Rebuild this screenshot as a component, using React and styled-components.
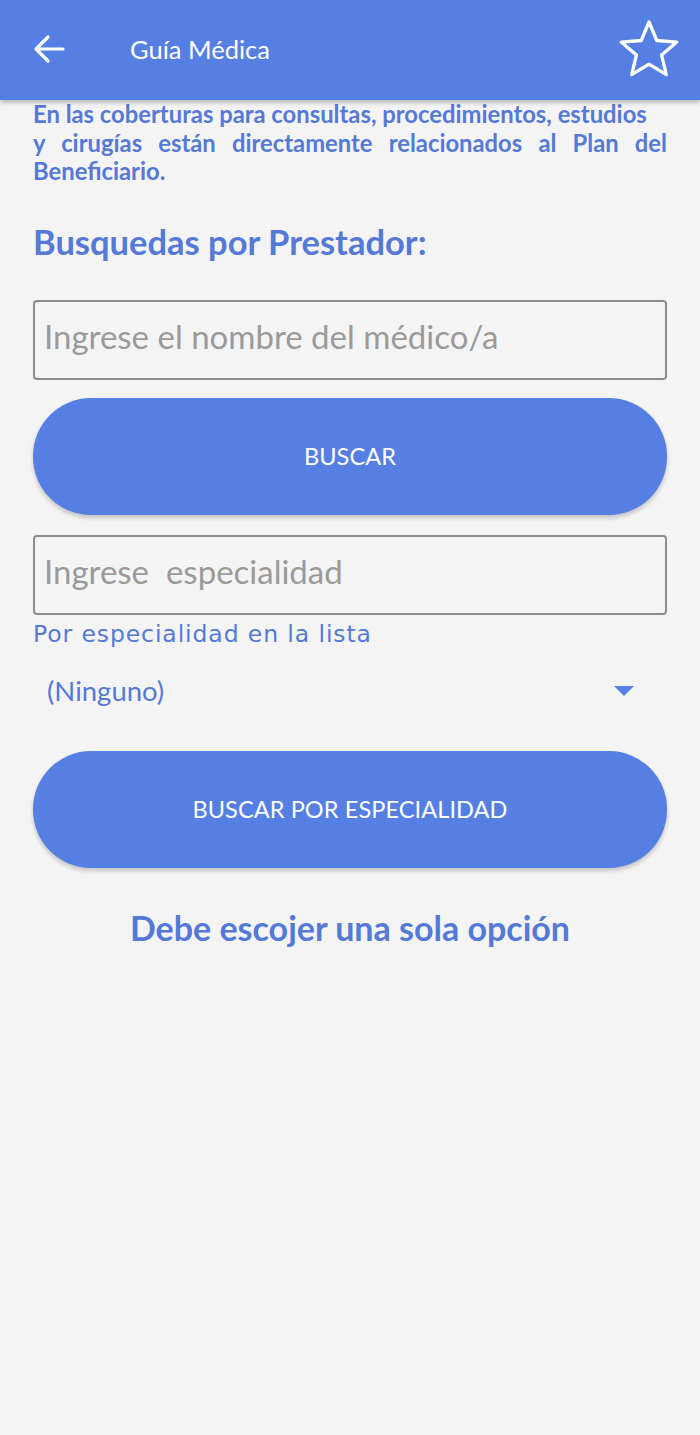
import React from "react";
import styled, { createGlobalStyle } from "styled-components";

const Global = createGlobalStyle`
  html, body { margin: 0; padding: 0; background: #f4f4f4; }
  body { font-family: Lato, "Open Sans", sans-serif; }
  * { box-sizing: border-box; }
`;

const BLUE = "#567fe3";
const TEXT_BLUE = "#5479d6";

const Page = styled.div`
  width: 700px;
  min-height: 1435px;
  background: #f4f4f4;
`;

const Header = styled.header`
  height: 100px;
  background: ${BLUE};
  display: flex;
  align-items: center;
  padding: 0 20px 2px 33px;
  box-shadow: 0 2px 5px rgba(0, 0, 0, 0.3);
  position: relative;
  z-index: 1;
`;

const IconButton = styled.div`
  display: flex;
  align-items: center;
  justify-content: center;
`;

const Title = styled.h1`
  margin: 0 0 0 65px;
  flex: 1;
  font-family: Lato, sans-serif;
  font-weight: 400;
  font-size: 25.5px;
  color: #fff;
`;

const Content = styled.main`
  padding: 0 33px;
  display: flex;
  flex-direction: column;
`;

const Notice = styled.p`
  margin: 0;
  font-family: Lato, sans-serif;
  font-weight: 700;
  font-size: 23.8px;
  line-height: 28.5px;
  color: ${TEXT_BLUE};
  text-align: justify;
`;

const Heading = styled.h2`
  margin: 36px 0 0;
  font-family: Lato, sans-serif;
  font-weight: 700;
  font-size: 34.5px;
  line-height: 40px;
  color: ${TEXT_BLUE};
`;

const Input = styled.input`
  display: block;
  width: 100%;
  height: 80px;
  margin-top: ${(p) => p.$mt}px;
  border: 2px solid #8c8c8c;
  border-radius: 4px;
  background: transparent;
  padding: 0 9px 7px;
  font-family: Lato, sans-serif;
  font-size: 33px;
  color: #333;
  outline: none;
  &::placeholder { color: #9a9a9a; }
`;

const Button = styled.button`
  display: flex;
  align-items: center;
  justify-content: center;
  width: 100%;
  height: 117px;
  margin-top: ${(p) => p.$mt}px;
  border: none;
  border-radius: 58px;
  background: ${BLUE};
  color: #fff;
  font-family: Lato, sans-serif;
  font-size: 23.5px;
  letter-spacing: 0.1px;
  box-shadow: 0 3px 4px rgba(0, 0, 0, 0.2);
`;

const Label = styled.div`
  margin-top: 5px;
  font-family: "DejaVu Sans", "Open Sans", sans-serif;
  font-size: 23.5px;
  line-height: 28px;
  color: ${TEXT_BLUE};
  letter-spacing: 0.9px;
`;

const Select = styled.div`
  display: flex;
  align-items: center;
  justify-content: space-between;
  height: 56px;
  margin-top: 15px;
  padding: 0 33px 0 14px;
  font-family: Lato, sans-serif;
  font-size: 27.5px;
  color: ${TEXT_BLUE};
`;

const Caret = styled.span`
  width: 0;
  height: 0;
  border-left: 10px solid transparent;
  border-right: 10px solid transparent;
  border-top: 10px solid ${BLUE};
`;

const Footer = styled.p`
  margin: 40px 0 0;
  text-align: center;
  font-family: Lato, sans-serif;
  font-weight: 700;
  font-size: 34px;
  line-height: 40px;
  color: ${TEXT_BLUE};
`;

export default function App() {
  return (
    <Page>
      <Global />
      <Header>
        <IconButton>
          <svg width="32" height="30" viewBox="0 0 32 30" fill="none" stroke="#fff" strokeWidth="3.2" strokeLinecap="round" strokeLinejoin="round">
            <path d="M30 15H3M15 3L3 15l12 12" />
          </svg>
        </IconButton>
        <Title>Guía Médica</Title>
        <IconButton>
          <svg width="62" height="60" viewBox="0 0 62 60" fill="none" stroke="#fff" strokeWidth="3.3" strokeLinejoin="round">
            <path d="M31 3l7.8 18.5 20 1.6-15.2 13 4.7 19.5L31 45.2 13.7 55.6l4.7-19.5L3.2 23.1l20-1.6z" />
          </svg>
        </IconButton>
      </Header>
      <Content>
        <Notice>
          En las coberturas para consultas, procedimientos, estudios
          <br />y cirugías están directamente relacionados al Plan del Beneficiario.
        </Notice>
        <Heading>Busquedas por Prestador:</Heading>
        <Input $mt={38} placeholder="Ingrese el nombre del médico/a" />
        <Button $mt={18}>BUSCAR</Button>
        <Input $mt={20} placeholder="Ingrese  especialidad" />
        <Label>Por especialidad en la lista</Label>
        <Select>
          <span>(Ninguno)</span>
          <Caret />
        </Select>
        <Button $mt={32}>BUSCAR POR ESPECIALIDAD</Button>
        <Footer>Debe escojer una sola opción</Footer>
      </Content>
    </Page>
  );
}
